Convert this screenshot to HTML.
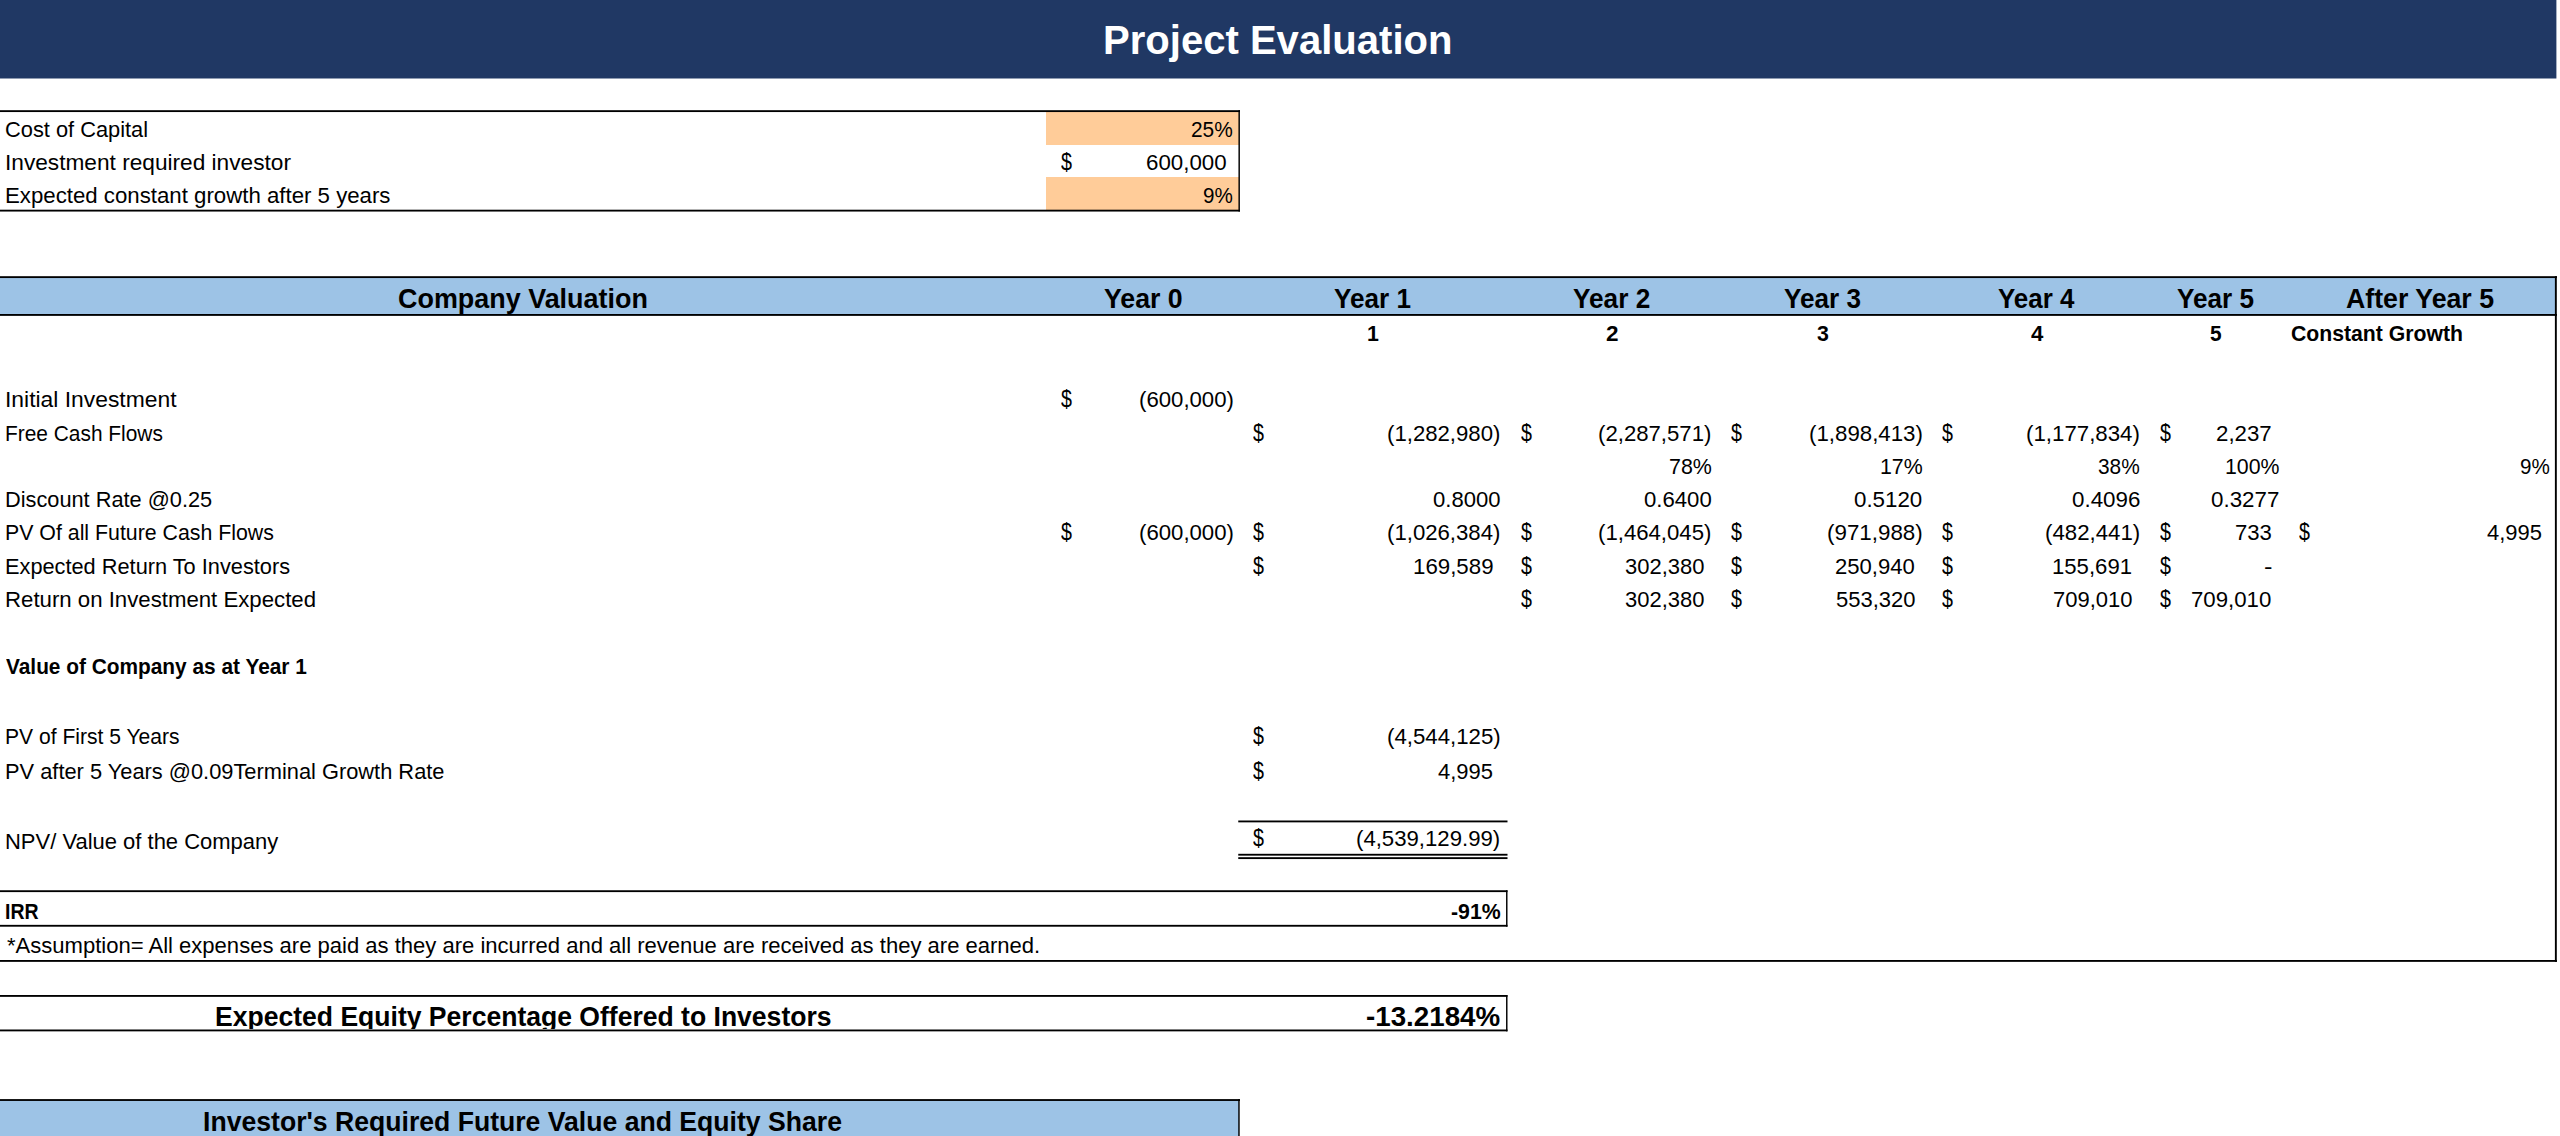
<!DOCTYPE html>
<html lang="en"><head><meta charset="utf-8"><title>Project Evaluation</title><style>html,body{margin:0;padding:0;background:#fff;overflow:hidden}body{width:2560px;height:1136px;position:relative;overflow:hidden;font-family:"Liberation Sans",sans-serif}.bg{position:absolute;left:0;top:0;display:block}.x{position:absolute;white-space:nowrap;line-height:1;transform-origin:0 0}.r{font-size:21.3px;font-weight:400;color:#000}.b{font-size:21.5px;font-weight:700;color:#000}.h{font-size:26.9px;font-weight:700;color:#000}.t{font-size:41.5px;font-weight:700;color:#fff}.clip{position:absolute;left:0;top:997px;width:1505px;height:32.4px;overflow:hidden}</style></head><body>
<svg class="bg" width="2560" height="1136" viewBox="0 0 2560 1136"><rect x="0" y="0" width="2556.4" height="78.5" fill="#203864"/><rect x="1046" y="111" width="193" height="34" fill="#ffcc99"/><rect x="1046" y="177.0" width="193" height="33.5" fill="#ffcc99"/><rect x="0" y="277.5" width="2556" height="38.0" fill="#9dc3e6"/><rect x="0" y="1100" width="1239" height="36" fill="#9dc3e6"/><rect x="0" y="110.2" width="1240" height="1.85" fill="#000"/><rect x="0" y="209.7" width="1240" height="1.85" fill="#000"/><rect x="1238.45" y="110.2" width="1.45" height="101.35" fill="#000"/><rect x="0" y="276.2" width="2557" height="1.85" fill="#000"/><rect x="0" y="314.0" width="2557" height="1.85" fill="#000"/><rect x="2554.9" y="276.2" width="1.9" height="685.65" fill="#000"/><rect x="0" y="960.0" width="2557" height="1.85" fill="#000"/><rect x="1238.25" y="820.5" width="269.25" height="1.85" fill="#000"/><rect x="1238.25" y="853.8" width="269.25" height="1.85" fill="#000"/><rect x="1238.25" y="857.2" width="269.25" height="1.85" fill="#000"/><rect x="0" y="890.25" width="1507.5" height="1.85" fill="#000"/><rect x="0" y="924.85" width="1507.5" height="1.85" fill="#000"/><rect x="1506.05" y="890.25" width="1.45" height="36.45" fill="#000"/><rect x="0" y="995" width="1507.5" height="1.85" fill="#000"/><rect x="0" y="1029.5" width="1507.5" height="1.85" fill="#000"/><rect x="1506.05" y="995" width="1.45" height="36.35" fill="#000"/><rect x="0" y="1099.1" width="1240" height="1.85" fill="#000"/><rect x="1238.25" y="1099.1" width="1.45" height="36.9" fill="#000"/></svg>
<div class="x t" style="left:1102.50px;top:19.00px;transform:scaleX(0.9651)">Project Evaluation</div>
<div class="x r" style="left:5.38px;top:120.00px;transform:scaleX(1.0241)">Cost of Capital</div>
<div class="x r" style="left:4.63px;top:153.00px;transform:scaleX(1.0641)">Investment required investor</div>
<div class="x r" style="left:4.66px;top:186.00px;transform:scaleX(1.0437)">Expected constant growth after 5 years</div>
<div class="x r" style="left:1191.27px;top:120.00px;transform:scaleX(0.9793)">25%</div>
<div class="x r" style="left:1060.60px;top:153.00px;transform-origin:0 17px;transform:scale(0.9272,1.1)">$</div>
<div class="x r" style="left:1145.75px;top:153.00px;transform:scaleX(1.0468)">600,000</div>
<div class="x r" style="left:1203.23px;top:186.00px;transform:scaleX(0.9673)">9%</div>
<div class="x h" style="left:398.16px;top:285.50px;transform:scaleX(1.0013)">Company Valuation</div>
<div class="x h" style="left:1103.68px;top:285.50px;transform:scaleX(0.9927)">Year 0</div>
<div class="x h" style="left:1334.19px;top:285.50px;transform:scaleX(0.9720)">Year 1</div>
<div class="x h" style="left:1572.69px;top:285.50px;transform:scaleX(0.9745)">Year 2</div>
<div class="x h" style="left:1784.19px;top:285.50px;transform:scaleX(0.9720)">Year 3</div>
<div class="x h" style="left:1997.99px;top:285.50px;transform:scaleX(0.9642)">Year 4</div>
<div class="x h" style="left:2176.69px;top:285.50px;transform:scaleX(0.9720)">Year 5</div>
<div class="x h" style="left:2345.88px;top:285.50px;transform:scaleX(0.9937)">After Year 5</div>
<div class="x b" style="left:1366.67px;top:324.00px;transform:scaleX(0.9922)">1</div>
<div class="x b" style="left:1605.55px;top:324.00px;transform:scaleX(1.0465)">2</div>
<div class="x b" style="left:1816.67px;top:324.00px;transform:scaleX(0.9922)">3</div>
<div class="x b" style="left:2030.50px;top:324.00px;transform:scaleX(1.0336)">4</div>
<div class="x b" style="left:2209.67px;top:324.00px;transform:scaleX(0.9697)">5</div>
<div class="x b" style="left:2291.09px;top:324.00px;transform:scaleX(0.9860)">Constant Growth</div>
<div class="x r" style="left:4.61px;top:390.00px;transform:scaleX(1.0734)">Initial Investment</div>
<div class="x r" style="left:4.77px;top:424.00px;transform:scaleX(0.9808)">Free Cash Flows</div>
<div class="x r" style="left:4.70px;top:490.00px;transform:scaleX(1.0217)">Discount Rate @0.25</div>
<div class="x r" style="left:4.73px;top:523.00px;transform:scaleX(1.0008)">PV Of all Future Cash Flows</div>
<div class="x r" style="left:4.70px;top:557.00px;transform:scaleX(1.0217)">Expected Return To Investors</div>
<div class="x r" style="left:4.67px;top:590.00px;transform:scaleX(1.0426)">Return on Investment Expected</div>
<div class="x r" style="left:1060.50px;top:390.00px;transform-origin:0 17px;transform:scale(0.9229,1.1)">$</div>
<div class="x r" style="left:1138.71px;top:390.00px;transform:scaleX(1.0412)">(600,000)</div>
<div class="x r" style="left:1253.00px;top:424.00px;transform-origin:0 17px;transform:scale(0.9229,1.1)">$</div>
<div class="x r" style="left:1387.21px;top:424.00px;transform:scaleX(1.0412)">(1,282,980)</div>
<div class="x r" style="left:1520.50px;top:424.00px;transform-origin:0 17px;transform:scale(0.9229,1.1)">$</div>
<div class="x r" style="left:1598.46px;top:424.00px;transform:scaleX(1.0412)">(2,287,571)</div>
<div class="x r" style="left:1731.25px;top:424.00px;transform-origin:0 17px;transform:scale(0.9229,1.1)">$</div>
<div class="x r" style="left:1808.96px;top:424.00px;transform:scaleX(1.0459)">(1,898,413)</div>
<div class="x r" style="left:1942.25px;top:424.00px;transform-origin:0 17px;transform:scale(0.9229,1.1)">$</div>
<div class="x r" style="left:2026.46px;top:424.00px;transform:scaleX(1.0459)">(1,177,834)</div>
<div class="x r" style="left:2159.50px;top:424.00px;transform-origin:0 17px;transform:scale(0.9229,1.1)">$</div>
<div class="x r" style="left:2216.46px;top:424.00px;transform:scaleX(1.0449)">2,237</div>
<div class="x r" style="left:1669.00px;top:457.00px;transform:scaleX(1.0061)">78%</div>
<div class="x r" style="left:1879.92px;top:457.00px;transform:scaleX(1.0021)">17%</div>
<div class="x r" style="left:2098.10px;top:457.00px;transform:scaleX(0.9799)">38%</div>
<div class="x r" style="left:2224.92px;top:457.00px;transform:scaleX(0.9998)">100%</div>
<div class="x r" style="left:2519.53px;top:457.00px;transform:scaleX(0.9690)">9%</div>
<div class="x r" style="left:1433.06px;top:490.00px;transform:scaleX(1.0359)">0.8000</div>
<div class="x r" style="left:1643.81px;top:490.00px;transform:scaleX(1.0398)">0.6400</div>
<div class="x r" style="left:1854.30px;top:490.00px;transform:scaleX(1.0477)">0.5120</div>
<div class="x r" style="left:2071.80px;top:490.00px;transform:scaleX(1.0492)">0.4096</div>
<div class="x r" style="left:2211.30px;top:490.00px;transform:scaleX(1.0492)">0.3277</div>
<div class="x r" style="left:1060.50px;top:523.00px;transform-origin:0 17px;transform:scale(0.9229,1.1)">$</div>
<div class="x r" style="left:1138.71px;top:523.00px;transform:scaleX(1.0412)">(600,000)</div>
<div class="x r" style="left:1253.00px;top:523.00px;transform-origin:0 17px;transform:scale(0.9229,1.1)">$</div>
<div class="x r" style="left:1387.21px;top:523.00px;transform:scaleX(1.0412)">(1,026,384)</div>
<div class="x r" style="left:1520.50px;top:523.00px;transform-origin:0 17px;transform:scale(0.9229,1.1)">$</div>
<div class="x r" style="left:1598.46px;top:523.00px;transform:scaleX(1.0412)">(1,464,045)</div>
<div class="x r" style="left:1731.25px;top:523.00px;transform-origin:0 17px;transform:scale(0.9229,1.1)">$</div>
<div class="x r" style="left:1827.20px;top:523.00px;transform:scaleX(1.0496)">(971,988)</div>
<div class="x r" style="left:1942.25px;top:523.00px;transform-origin:0 17px;transform:scale(0.9229,1.1)">$</div>
<div class="x r" style="left:2045.21px;top:523.00px;transform:scaleX(1.0440)">(482,441)</div>
<div class="x r" style="left:2159.50px;top:523.00px;transform-origin:0 17px;transform:scale(0.9229,1.1)">$</div>
<div class="x r" style="left:2235.21px;top:523.00px;transform:scaleX(1.0393)">733</div>
<div class="x r" style="left:2299.25px;top:523.00px;transform-origin:0 17px;transform:scale(0.9229,1.1)">$</div>
<div class="x r" style="left:2487.16px;top:523.00px;transform:scaleX(1.0316)">4,995</div>
<div class="x r" style="left:1253.00px;top:557.00px;transform-origin:0 17px;transform:scale(0.9229,1.1)">$</div>
<div class="x r" style="left:1412.86px;top:557.00px;transform:scaleX(1.0461)">169,589</div>
<div class="x r" style="left:1520.50px;top:557.00px;transform-origin:0 17px;transform:scale(0.9229,1.1)">$</div>
<div class="x r" style="left:1624.81px;top:557.00px;transform:scaleX(1.0323)">302,380</div>
<div class="x r" style="left:1731.25px;top:557.00px;transform-origin:0 17px;transform:scale(0.9229,1.1)">$</div>
<div class="x r" style="left:1835.46px;top:557.00px;transform:scaleX(1.0369)">250,940</div>
<div class="x r" style="left:1942.25px;top:557.00px;transform-origin:0 17px;transform:scale(0.9229,1.1)">$</div>
<div class="x r" style="left:2052.37px;top:557.00px;transform:scaleX(1.0394)">155,691</div>
<div class="x r" style="left:2159.50px;top:557.00px;transform-origin:0 17px;transform:scale(0.9229,1.1)">$</div>
<div class="x r" style="left:2264.21px;top:557.00px;transform:scaleX(1.1930)">-</div>
<div class="x r" style="left:1520.50px;top:590.00px;transform-origin:0 17px;transform:scale(0.9229,1.1)">$</div>
<div class="x r" style="left:1624.81px;top:590.00px;transform:scaleX(1.0323)">302,380</div>
<div class="x r" style="left:1731.25px;top:590.00px;transform-origin:0 17px;transform:scale(0.9229,1.1)">$</div>
<div class="x r" style="left:1835.81px;top:590.00px;transform:scaleX(1.0323)">553,320</div>
<div class="x r" style="left:1942.25px;top:590.00px;transform-origin:0 17px;transform:scale(0.9229,1.1)">$</div>
<div class="x r" style="left:2052.72px;top:590.00px;transform:scaleX(1.0336)">709,010</div>
<div class="x r" style="left:2159.50px;top:590.00px;transform-origin:0 17px;transform:scale(0.9229,1.1)">$</div>
<div class="x r" style="left:2191.46px;top:590.00px;transform:scaleX(1.0435)">709,010</div>
<div class="x b" style="left:6.30px;top:657.00px;transform:scaleX(0.9695)">Value of Company as at Year 1</div>
<div class="x r" style="left:4.75px;top:727.00px;transform:scaleX(0.9894)">PV of First 5 Years</div>
<div class="x r" style="left:1253.00px;top:727.00px;transform-origin:0 17px;transform:scale(0.9229,1.1)">$</div>
<div class="x r" style="left:1386.96px;top:727.00px;transform:scaleX(1.0436)">(4,544,125)</div>
<div class="x r" style="left:4.69px;top:762.00px;transform:scaleX(1.0248)">PV after 5 Years @0.09Terminal Growth Rate</div>
<div class="x r" style="left:1253.00px;top:762.00px;transform-origin:0 17px;transform:scale(0.9229,1.1)">$</div>
<div class="x r" style="left:1438.41px;top:762.00px;transform:scaleX(1.0316)">4,995</div>
<div class="x r" style="left:4.68px;top:832.00px;transform:scaleX(1.0321)">NPV/ Value of the Company</div>
<div class="x r" style="left:1253.00px;top:829.00px;transform-origin:0 17px;transform:scale(0.9229,1.1)">$</div>
<div class="x r" style="left:1356.46px;top:829.00px;transform:scaleX(1.0407)">(4,539,129.99)</div>
<div class="x b" style="left:5.08px;top:902.00px;transform:scaleX(0.9072)">IRR</div>
<div class="x b" style="left:1450.58px;top:902.00px;transform:scaleX(0.9906)">-91%</div>
<div class="x r" style="left:6.66px;top:936.00px;transform:scaleX(1.0347)">*Assumption= All expenses are paid as they are incurred and all revenue are received as they are earned.</div>
<div class="x h" style="left:202.94px;top:1109.00px;transform:scaleX(0.9892)">Investor's Required Future Value and Equity Share</div>
<div class="clip">
<div class="x h" style="left:214.84px;top:6.50px;transform:scaleX(0.9870)">Expected Equity Percentage Offered to Investors</div>
<div class="x h" style="left:1366.13px;top:6.50px;transform:scaleX(1.0319)">-13.2184%</div>
</div>
</body></html>
